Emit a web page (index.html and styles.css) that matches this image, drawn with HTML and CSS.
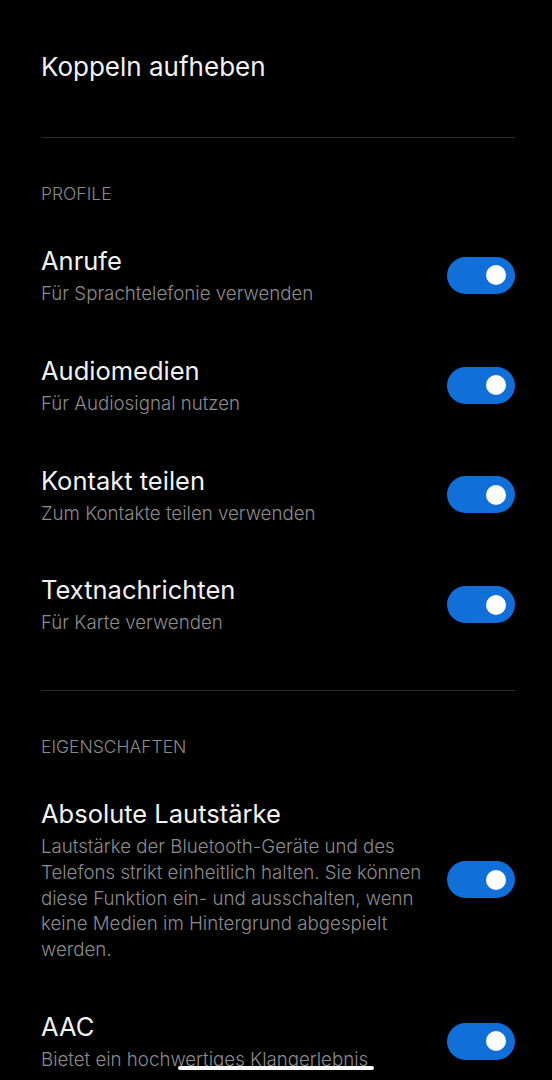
FILE: index.html
```html
<!DOCTYPE html>
<html lang="de">
<head>
    <meta charset="UTF-8">
    <meta name="viewport" content="width=device-width, initial-scale=1.0">
    <title>Bluetooth-Gerät</title>
    <link rel="stylesheet" href="styles.css">
</head>
<body>
    <div class="page">
        <div class="action">Koppeln aufheben</div>

        <div class="divider"></div>

        <div class="section">
            <div class="section-title">PROFILE</div>

            <div class="row">
                <div class="row-text">
                    <div class="row-title">Anrufe</div>
                    <div class="row-sub">Für Sprachtelefonie verwenden</div>
                </div>
                <div class="toggle on"><span class="knob"></span></div>
            </div>
            <div class="row">
                <div class="row-text">
                    <div class="row-title">Audiomedien</div>
                    <div class="row-sub">Für Audiosignal nutzen</div>
                </div>
                <div class="toggle on"><span class="knob"></span></div>
            </div>
            <div class="row">
                <div class="row-text">
                    <div class="row-title">Kontakt teilen</div>
                    <div class="row-sub">Zum Kontakte teilen verwenden</div>
                </div>
                <div class="toggle on"><span class="knob"></span></div>
            </div>
            <div class="row">
                <div class="row-text">
                    <div class="row-title">Textnachrichten</div>
                    <div class="row-sub">Für Karte verwenden</div>
                </div>
                <div class="toggle on"><span class="knob"></span></div>
            </div>
        </div>

        <div class="divider"></div>

        <div class="section">
            <div class="section-title">EIGENSCHAFTEN</div>

            <div class="row">
                <div class="row-text">
                    <div class="row-title">Absolute Lautstärke</div>
                    <div class="row-sub">Lautstärke der Bluetooth-Geräte und des Telefons strikt einheitlich halten. Sie können diese Funktion ein- und ausschalten, wenn keine Medien im Hintergrund abgespielt werden.</div>
                </div>
                <div class="toggle on"><span class="knob"></span></div>
            </div>
            <div class="row">
                <div class="row-text">
                    <div class="row-title">AAC</div>
                    <div class="row-sub">Bietet ein hochwertiges Klangerlebnis</div>
                </div>
                <div class="toggle on"><span class="knob"></span></div>
            </div>
        </div>
    </div>

    <div class="home-bar"></div>
</body>
</html>
```

FILE: styles.css
```css
/* dark settings page */
body {
    margin: 0;
    background-color: #000;
    color: #f2f2f2;
    font-family: Inter, "Noto Sans", sans-serif;
    height: 1080px;
    overflow: hidden;
}

.page {
    padding: 50px 37px 0 41px;
}

.action {
    font-size: 26px;
    line-height: 34px;
    font-weight: 400;
    margin-bottom: 53px;
}

.divider {
    border-top: 1px solid #2c2c2c;
}

.section {
    padding-top: 45px;
    padding-bottom: 7px;
}

.section-title {
    font-size: 17.5px;
    line-height: 22px;
    font-weight: 300;
    color: #8a8a8a;
    margin-bottom: 39px;
}

.row {
    display: flex;
    align-items: center;
    justify-content: space-between;
    margin-bottom: 47px;
}

.row-text {
    max-width: 396px;
}

.row-title {
    font-size: 25.5px;
    line-height: 34px;
    font-weight: 400;
    margin-bottom: 3px;
}

.row-sub {
    font-size: 18.7px;
    line-height: 25.75px;
    font-weight: 300;
    color: #8c8c8c;
}

.toggle {
    flex-shrink: 0;
    width: 68px;
    height: 37px;
    border-radius: 19px;
    background-color: #3a3a3a;
    display: flex;
    align-items: center;
    justify-content: flex-end;
    padding-right: 9px;
    box-sizing: border-box;
}

.toggle.on {
    background-color: #116fd9;
}

.knob {
    width: 20px;
    height: 20px;
    border-radius: 50%;
    background-color: #fff;
}

.home-bar {
    position: fixed;
    left: 50%;
    bottom: 10px;
    width: 196px;
    height: 4px;
    margin-left: -98px;
    border-radius: 2px;
    background-color: #fff;
}
```
